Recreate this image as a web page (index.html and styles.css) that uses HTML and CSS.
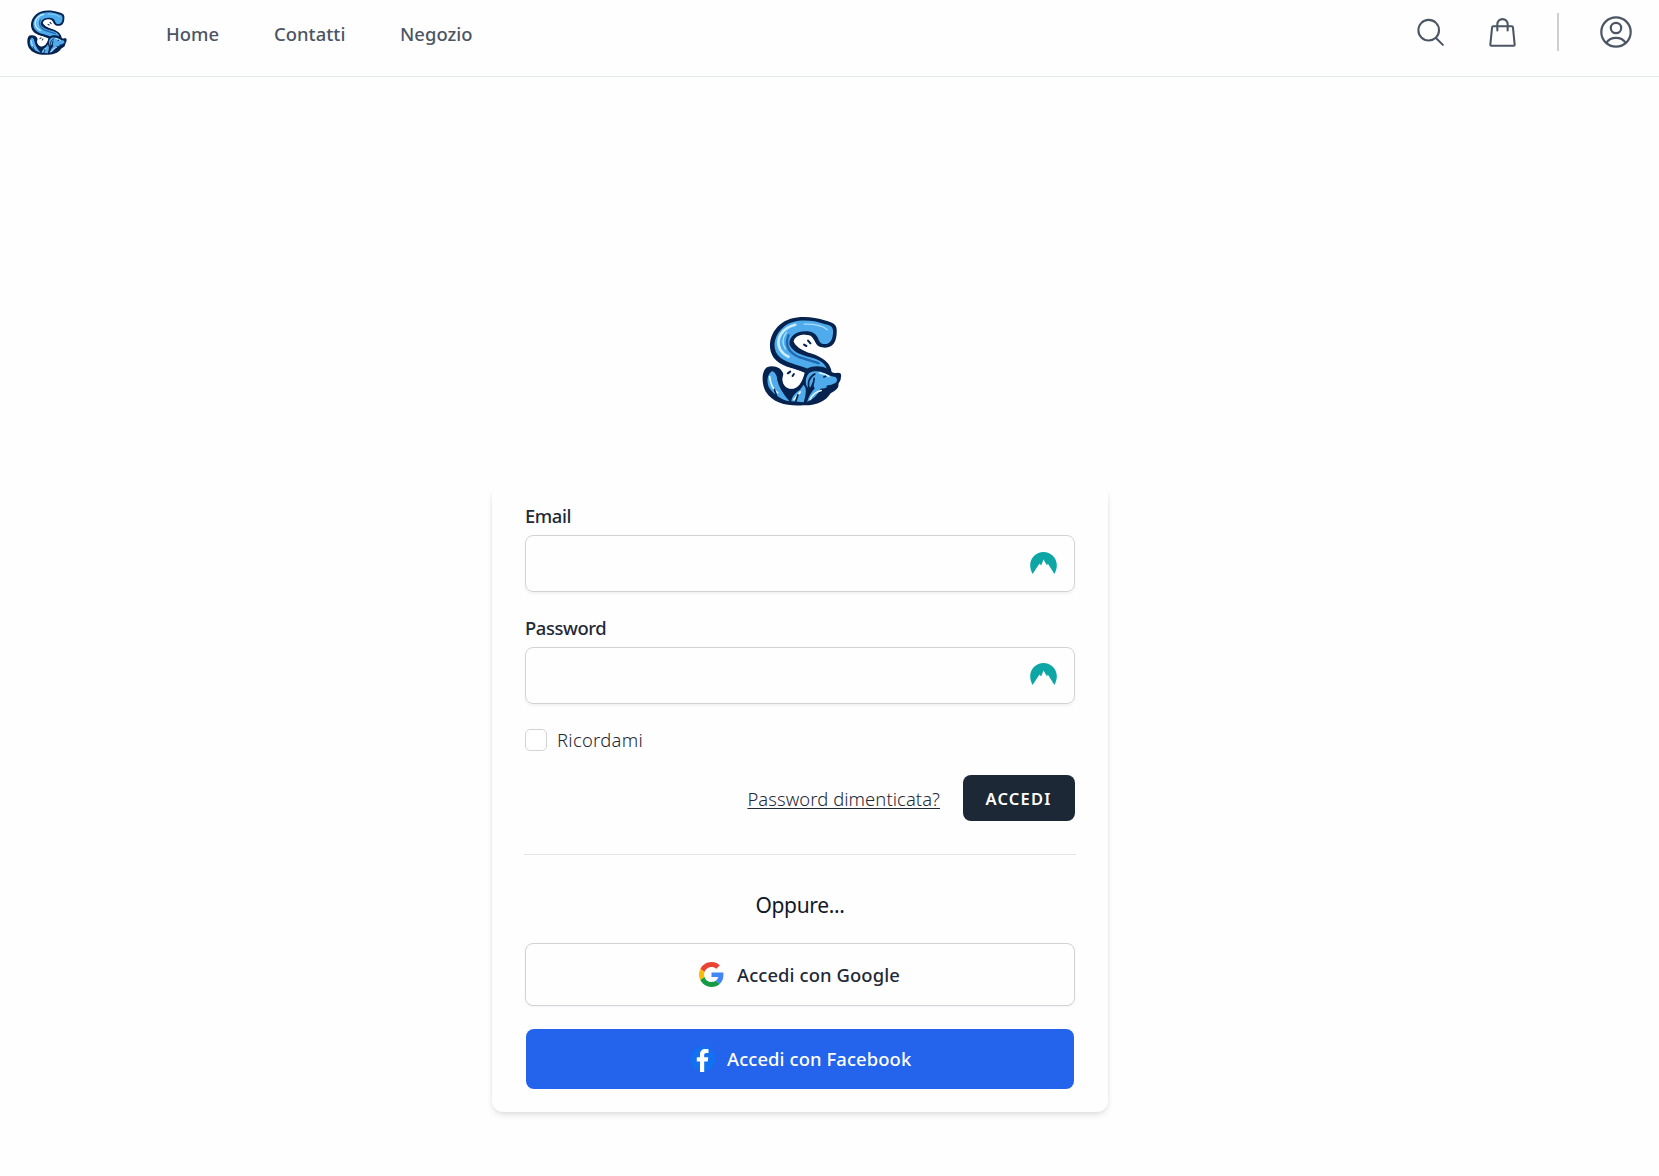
FILE: index.html
```html
<!DOCTYPE html>
<html lang="it">
<head>
<meta charset="utf-8">
<title>Accedi</title>
<link rel="stylesheet" href="styles.css">
</head>
<body>
<svg class="defs" aria-hidden="true">
  <symbol id="logo" viewBox="38 34 236 267">
    <path fill="#06234f" d="M259 75C259 55 241 52 225 47C180 32 120 31 90 60C61 85 51 127 72 158C90 182 130 190 164 202C157 230 145 252 120 250C100 245 94 225 101 207C96 187 72 178 52 186C35 198 36 235 48 258C72 295 115 302 160 299C200 300 228 285 241 263C258 255 266 246 264 236Q273 226 272 209Q271 202 262 202Q252 205 244 200C240 176 225 162 195 149C165 141 140 130 131 110C135 92 155 86 180 92C195 100 195 126 215 127C245 132 260 115 259 75Z"/>
    <path fill="#fff" d="M134 110Q146 82 178 93C194 101 191 125 213 129L199 148Q147 137 134 110ZM103 184Q130 188 161 202C158 230 143 250 120 249C101 244 94 225 102 207Q103 194 95 183Z"/>
    <path fill="#4fabec" d="M248 77C247 61 232 61 220 57C184 44 131 42 103 65C73 90 67 125 83 148C101 174 148 178 172 190C188 180 216 182 229 190C224 174 212 167 191 159C160 151 132 145 119 120C115 94 143 74 181 81C209 88 201 114 218 117C239 120 249 105 248 77Z"/>
    <path fill="none" stroke="#1f67b0" stroke-width="7" stroke-linecap="round" d="M116 91Q99 133 145 155L205 174"/>
    <path fill="none" stroke="#c8edff" stroke-width="8" stroke-linecap="round" d="M136 60C94 70 77 104 91 133Q100 148 116 155"/>
    <path fill="none" stroke="#a9defb" stroke-width="4" stroke-linecap="round" d="M162 58Q213 57 231 75M110 82Q91 108 107 132"/>
    <path fill="#4fabec" d="M68 197C53 204 49 231 60 249C73 268 96 283 119 287Q89 255 82 222Q82 205 68 197ZM124 287Q126 268 150 253L161 238Q174 252 161 290ZM168 239C164 211 178 195 198 198Q212 197 223 204Q240 213 255 215Q263 221 258 230Q252 242 235 243Q224 250 211 250Q199 277 171 289Q177 266 194 248Q188 241 190 225L178 253Z"/>
    <path fill="none" stroke="#dff5ff" stroke-width="5" stroke-linecap="round" d="M60 214Q64 249 84 262M132 282L151 259M180 281Q190 261 213 255M208 203Q225 205 236 213"/>
    <path fill="none" stroke="#06234f" stroke-width="5" stroke-linecap="round" stroke-linejoin="round" d="M82 276L74 252M137 289L144 268M194 206Q168 220 178 253Q191 241 192 219M221 215L226 213M231 243Q244 242 256 235"/>
    <path fill="#06234f" d="M252 208Q260 200 270 205Q272 214 266 220Q256 218 252 208Z"/>
    <path fill="none" stroke="#06234f" stroke-width="6" stroke-linecap="round" d="M162 119L169 123M174 107L181 115M114 204L121 199M128 212L132 206"/>
  </symbol>
  <symbol id="peaks" viewBox="0 0 27 22">
    <path fill="#0ea5a5" d="M2.6 22C-4 10 4 0 13.5 0S31 10 24.4 22L17.8 11.6L17 13.5L13.5 7.6L11.2 13.5L9.5 11.6Z"/>
  </symbol>
</svg>

<header class="topbar">
  <a class="brand"><svg class="brand-logo"><use href="#logo"/></svg></a>
  <nav class="nav">
    <a class="nav-home">Home</a>
    <a class="nav-contacts">Contatti</a>
    <a class="nav-shop">Negozio</a>
  </nav>
  <div class="actions">
    <svg class="icon" viewBox="0 0 24 24"><path d="m21 21-5.2-5.2m0 0A7.5 7.5 0 1 0 5.2 5.2a7.5 7.5 0 0 0 10.6 10.6Z"/></svg>
    <svg class="icon icon-bag" viewBox="0 0 24 24"><path d="M15.75 10.5V6a3.75 3.75 0 1 0-7.5 0v4.5m11.36-2 1.26 12.4q0 .8-.8.8H3.93q-.8 0-.8-.8L4.4 8.5q.1-1 .8-1h13.6q.7 0 .8 1Z"/></svg>
    <span class="separator"></span>
    <svg class="icon-user" viewBox="0 0 32 32"><circle cx="16" cy="16" r="14.7"/><circle cx="16" cy="12" r="5.2"/><path d="M6.4 26.8Q9.7 21.9 16 21.9T25.6 26.8"/></svg>
  </div>
</header>

<main class="page">
  <svg class="main-logo"><use href="#logo"/></svg>
  <div class="card-clip">
  <form class="card">
    <label class="label label-email" for="email">Email</label>
    <div class="field"><input id="email" type="text"><svg class="peaks"><use href="#peaks"/></svg></div>
    <label class="label label-password" for="password">Password</label>
    <div class="field"><input id="password" type="password"><svg class="peaks peaks-high"><use href="#peaks"/></svg></div>
    <label class="remember"><input class="check" type="checkbox"><span>Ricordami</span></label>
    <div class="submit-row">
      <a class="forgot">Password dimenticata?</a>
      <button class="submit" type="button"><span>ACCEDI</span></button>
    </div>
    <hr class="rule">
    <p class="or"><span>Oppure...</span></p>
    <button class="social google" type="button">
      <svg class="google-icon" viewBox="0 0 48 48">
        <path fill="#ea4335" d="M24 9.5c3.54 0 6.71 1.22 9.21 3.6l6.85-6.85C35.9 2.38 30.47 0 24 0 14.62 0 6.51 5.38 2.56 13.22l7.98 6.19C12.43 13.72 17.74 9.5 24 9.5z"/>
        <path fill="#4285f4" d="M46.98 24.55c0-1.57-.15-3.09-.38-4.55H24v9.02h12.94c-.58 2.96-2.26 5.48-4.78 7.18l7.73 6c4.51-4.18 7.09-10.36 7.09-17.65z"/>
        <path fill="#fbbc05" d="M10.53 28.59A14.5 14.5 0 0 1 9.77 24c0-1.6.27-3.14.76-4.59l-7.98-6.19A23.9 23.9 0 0 0 0 24c0 3.88.92 7.54 2.56 10.78l7.97-6.19z"/>
        <path fill="#159a45" d="M24 48c6.48 0 11.93-2.13 15.89-5.81l-7.73-6c-2.15 1.45-4.92 2.3-8.16 2.3-6.26 0-11.57-4.22-13.47-9.91l-7.98 6.19C6.51 42.62 14.62 48 24 48z"/>
      </svg>
      <span class="google-text">Accedi con Google</span>
    </button>
    <button class="social facebook" type="button">
      <svg class="facebook-icon" viewBox="0 0 26 26">
        <circle cx="13" cy="13" r="12.5" fill="#1271f2"/>
        <path fill="#fff" d="M10 26V15.4H6.8V11.2h3.2V8.9c0-4 2-5.9 5.5-5.9 1.4 0 2.4.1 3 .3v3.6h-2c-1.7 0-2.3.8-2.3 2.2v2.1h4.1l-.6 4.2h-3.5V26Z"/>
      </svg>
      <span class="facebook-text">Accedi con Facebook</span>
    </button>
  </form>
  </div>
</main>
</body>
</html>
```
FILE: styles.css
```css
* { box-sizing: border-box; }
body {
  margin: 0;
  min-height: 1176px;
  background: #fefefe;
  color: #1f2937;
  font: 500 18.4px/28px "Noto Sans", "Open Sans", sans-serif;
}
.defs { display: none; }
svg { display: block; flex: none; }

.topbar {
  display: flex;
  height: 77px;
  padding-left: 27px;
  border-bottom: 1px solid #e3e6e9;
}
.brand { width: 139px; padding-top: 10px; }
.brand-logo { width: 40px; height: 45px; }
.nav { display: flex; padding-top: 20px; color: #4b5563; letter-spacing: .05px; }
.nav-home { width: 108px; }
.nav-contacts { width: 126px; }
.actions {
  display: flex;
  margin-left: auto;
  padding-right: 27px;
  padding-top: 13px;
}
.icon, .icon-user { fill: none; stroke: #4b5563; stroke-linecap: round; stroke-linejoin: round; }
.icon { width: 33px; height: 33px; margin-top: 3px; stroke-width: 1.5; }
.icon-bag { margin-left: 39px; }
.separator { width: 2px; height: 38px; margin: 0 41px 0 38px; background: #cdcfd2; }
.icon-user { width: 32px; height: 32px; margin-top: 3px; stroke-width: 2.2; }

/* The right padding moves the whole column left of the window's centre. */
.page { display: flex; flex-direction: column; align-items: center; padding-right: 59px; }
.main-logo { width: 80px; height: 90px; margin: 239px 0 0 4px; }
/* The card's shadow starts level with its top edge. */
.card-clip { margin-top: 86px; padding: 0 10px 14px; overflow: hidden; }
.card {
  display: flex;
  flex-direction: column;
  width: 616px;
  height: 620px;
  padding: 10px 33px 0;
  border-radius: 0 0 11px 11px;
  background: #fefefe;
  box-shadow: 0 4px 7px -1px rgba(0, 0, 0, .11), 0 0 4px rgba(0, 0, 0, .05);
}
.label { height: 33px; letter-spacing: -.4px; }
.label-password { margin-top: 22px; }
.field {
  display: flex;
  height: 57px;
  padding-right: 17px;
  border: 1px solid #d1d3d6;
  border-radius: 8px;
  box-shadow: 0 2px 3px rgba(0, 0, 0, .05);
}
.field input { flex: 1; min-width: 0; border: 0; outline: 0; background: none; }
.peaks { width: 27px; height: 22px; margin-top: 16px; }
.peaks-high { margin-top: 15px; }
.remember { display: flex; align-items: center; height: 28px; margin-top: 22px; font-weight: 300; letter-spacing: .3px; color: #1f2937; }
.check {
  appearance: none;
  width: 22px;
  height: 22px;
  margin: 0 10px 0 0;
  border: 1px solid #d1d3d6;
  border-radius: 5px;
  background: #fff;
}
.submit-row { display: flex; justify-content: flex-end; align-items: center; height: 46px; margin-top: 21px; }
.forgot { margin: 1px 23px 0 0; font-weight: 300; letter-spacing: .08px; color: #1f2937; text-decoration: underline; text-underline-offset: 2px; text-decoration-thickness: 1px; }
.submit {
  width: 112px;
  height: 46px;
  padding: 2px 1px 0 0;
  border: 0;
  border-radius: 8px;
  background: #1d2836;
  color: #fff;
  font: 600 16.5px/24px "Noto Sans", sans-serif;
  letter-spacing: 1.2px;
}
.rule { width: 552px; height: 1px; margin: 33px -1px 0; border: 0; background: #e2e4e7; flex: none; }
.or { margin: 34px 0 0; height: 32px; text-align: center; font-size: 21px; letter-spacing: -.35px; font-weight: 400; line-height: 32px; color: #111827; }
.social {
  display: flex;
  align-items: center;
  flex: none;
  border-radius: 8px;
  font: inherit;
  letter-spacing: .1px;
}
.google { height: 63px; margin-top: 22px; padding: 0 0 0 173px; border: 1px solid #d1d3d8; background: #fefefe; color: #1f2937; box-shadow: 0 1px 2px rgba(0, 0, 0, .05); }
.google-icon { width: 25px; height: 25px; margin-right: 13px; }
.facebook { height: 60px; margin: 23px 1px 0; padding: 0 0 0 164px; border: 0; background: #2463eb; color: #fff; }
.facebook-icon { width: 26px; height: 26px; margin-right: 11px; }
```
